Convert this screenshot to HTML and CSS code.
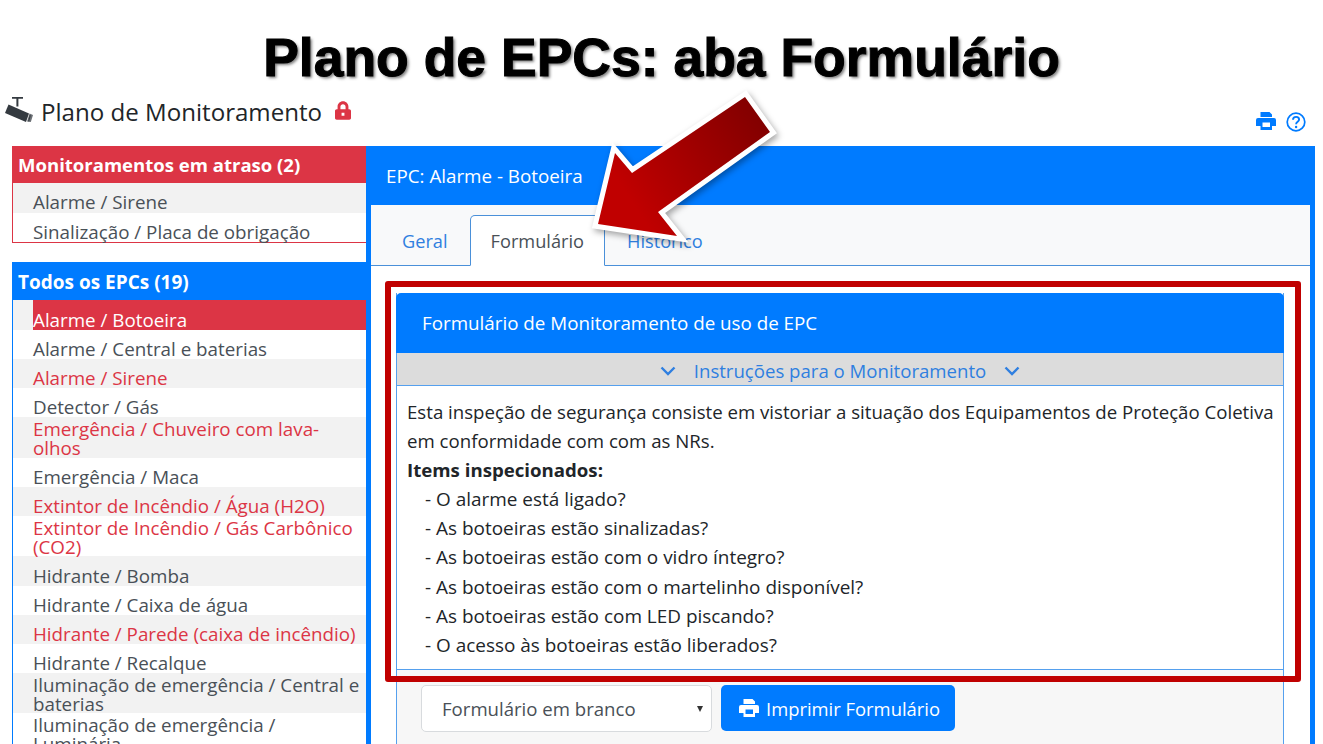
FILE: index.html
```html
<!DOCTYPE html>
<html lang="pt">
<head>
<meta charset="utf-8">
<title>Plano de EPCs</title>
<link rel="stylesheet" href="styles.css">
</head>
<body>
<div class="page">
  <h1 class="slide-title">Plano de EPCs: aba Formulário</h1>
  <header class="app-head">
    <div class="app-title">
      <svg class="cam" viewBox="0 0 28 25" width="28" height="25"><path fill="#343a40" d="M7 0h11v1.800h-4.600V9.500h-2V1.800H7z"/><path fill="#343a40" d="M3.500 7.500 24 16.500 21 25 0 16z"/><path fill="#6c7075" d="M24.500 16.500l3.500 1.500-2.200 7-3.800-.5z"/><path fill="#343a40" d="M24.800 18l1 .4-1.700 6-1-.2z"/></svg>
      <span>Plano de Monitoramento</span>
      <svg class="lock" viewBox="0 0 448 512" width="16" height="19"><path fill="#dc3545" d="M400 224h-24v-72C376 68 308 0 224 0S72 68 72 152v72H48c-26.500 0-48 21.500-48 48v192c0 26.500 21.500 48 48 48h352c26.500 0 48-21.500 48-48V272c0-26.500-21.500-48-48-48zm-104 0H152v-72c0-39.700 32.300-72 72-72s72 32.300 72 72v72zM184 320h80v80h-80z" fill-rule="evenodd"/></svg>
    </div>
    <div class="app-tools">
      <svg viewBox="0 0 20 18" width="20" height="18"><path fill="#007bff" fill-rule="evenodd" d="M4.500 0h9L16 2.500V5H4.500zM2 6h16a2 2 0 0 1 2 2v6h-4v4H4.500v-4H0V8a2 2 0 0 1 2-2zM6.500 10.500v4.500h7.500v-4.500z"/></svg>
      <svg viewBox="0 0 20 20" width="20" height="20"><circle cx="10" cy="10" r="8.800" fill="none" stroke="#007bff" stroke-width="1.700"/><path fill="none" stroke="#007bff" stroke-width="1.900" d="M7 7.800c0-1.800 1.400-2.900 3.100-2.900 1.800 0 3 1.100 3 2.600 0 2.300-3 2.300-3 4.700"/><circle cx="10.100" cy="15" r="1.200" fill="#007bff"/></svg>
    </div>
  </header>
  <div class="columns">
    <aside class="sidebar">
      <section class="list-card danger">
        <h2 class="list-head">Monitoramentos em atraso (2)</h2>
        <ul class="list">
          <li class="row">Alarme / Sirene</li>
          <li class="row">Sinalização / Placa de obrigação</li>
        </ul>
      </section>
      <section class="list-card primary">
        <h2 class="list-head">Todos os EPCs (19)</h2>
        <ul class="list">
          <li class="row"><span class="selected">Alarme / Botoeira</span></li>
          <li class="row">Alarme / Central e baterias</li>
          <li class="row late">Alarme / Sirene</li>
          <li class="row">Detector / Gás</li>
          <li class="row late">Emergência / Chuveiro com lava-olhos</li>
          <li class="row">Emergência / Maca</li>
          <li class="row late">Extintor de Incêndio / Água (H2O)</li>
          <li class="row late">Extintor de Incêndio / Gás Carbônico (CO2)</li>
          <li class="row">Hidrante / Bomba</li>
          <li class="row">Hidrante / Caixa de água</li>
          <li class="row late">Hidrante / Parede (caixa de incêndio)</li>
          <li class="row">Hidrante / Recalque</li>
          <li class="row">Iluminação de emergência / Central e baterias</li>
          <li class="row">Iluminação de emergência / Luminária</li>
        </ul>
      </section>
    </aside>
    <main class="panel">
      <div class="panel-head">EPC: Alarme - Botoeira</div>
      <div class="panel-body">
        <nav class="tabs">
          <a class="tab">Geral</a>
          <a class="tab active">Formulário</a>
          <a class="tab">Histórico</a>
        </nav>
        <div class="tab-content">
          <section class="form-card">
            <div class="form-head">Formulário de Monitoramento de uso de EPC</div>
            <div class="instr-bar">
              <svg viewBox="0 0 16 10" width="16" height="10"><path fill="none" stroke="#2f7fe0" stroke-width="2.400" d="M1.500 1.500 8 8l6.500-6.500"/></svg>
              <span>Instruções para o Monitoramento</span>
              <svg viewBox="0 0 16 10" width="16" height="10"><path fill="none" stroke="#2f7fe0" stroke-width="2.400" d="M1.500 1.500 8 8l6.500-6.500"/></svg>
            </div>
            <div class="instr-text">
              <p>Esta inspeção de segurança consiste em vistoriar a situação dos Equipamentos de Proteção Coletiva em conformidade com com as NRs.</p>
              <p class="items-title"><strong>Items inspecionados:</strong></p>
              <p class="item">- O alarme está ligado?</p>
              <p class="item">- As botoeiras estão sinalizadas?</p>
              <p class="item">- As botoeiras estão com o vidro íntegro?</p>
              <p class="item">- As botoeiras estão com o martelinho disponível?</p>
              <p class="item">- As botoeiras estão com LED piscando?</p>
              <p class="item">- O acesso às botoeiras estão liberados?</p>
            </div>
            <div class="form-foot">
              <div class="select"><span>Formulário em branco</span><i class="caret"></i></div>
              <button class="btn" type="button">
                <svg viewBox="0 0 20 18" width="20" height="18"><path fill="#fff" fill-rule="evenodd" d="M4.500 0h9L16 2.500V5H4.500zM2 6h16a2 2 0 0 1 2 2v6h-4v4H4.500v-4H0V8a2 2 0 0 1 2-2zM6.500 10.500v4.500h7.500v-4.500z"/></svg>
                <span>Imprimir Formulário</span>
              </button>
            </div>
          </section>
        </div>
      </div>
    </main>
  </div>
  <div class="highlight"></div>
  <svg class="arrow" viewBox="0 0 1323 744" width="1323" height="744">
    <defs>
      <linearGradient id="arrowFill" x1="598" y1="225" x2="770" y2="115" gradientUnits="userSpaceOnUse">
        <stop offset="0.200" stop-color="#c00000"/>
        <stop offset="1" stop-color="#7f0000"/>
      </linearGradient>
    </defs>
    <polygon class="arrow-shape" points="598,224 615,153 632,173 745,97 770,132 658,212 677,236"/>
  </svg>
</div>
</body>
</html>
```
FILE: styles.css
```css
* { box-sizing: border-box; }
html, body { margin: 0; padding: 0; }
body {
  width: 1323px;
  height: 744px;
  overflow: hidden;
  background: #fff;
  font-family: "Open Sans", "Noto Sans", sans-serif;
  font-size: 18.6px;
  color: #343a40;
}
.page { position: relative; width: 1323px; height: 744px; overflow: hidden; }
.slide-title {
  margin: 0;
  height: 96px;
  padding-top: 28px;
  text-align: center;
  font-family: "Liberation Sans", sans-serif;
  font-weight: 700;
  font-size: 53.500px;
  line-height: 60px;
  color: #000;
  -webkit-text-stroke: 1px #000;
  text-shadow: 2px 2px 3px rgba(0,0,0,.5);
}
.app-head { display: flex; justify-content: space-between; height: 50px; padding: 0 17px 0 5px; }
.app-title { display: flex; align-items: flex-start; color: #212529; font-size: 24.100px; line-height: 32px; }
.cam { margin-top: 1px; margin-right: 8px; }
.lock { margin: 5px 0 0 13px; }
.app-tools { display: flex; gap: 10px; padding-top: 16px; align-items: flex-start; }
.columns { display: flex; padding: 0 8px 0 12px; }
.sidebar { width: 354px; flex: none; font-size: 18.800px; }
.list-card { margin-bottom: 19px; border-bottom: 1px solid #dc3545; }
.list-head { margin: 0; height: 37px; padding: 0 6px; color: #fff; font-size: 18.550px; font-weight: 700; line-height: 38px; }
.danger .list-head { background: #dc3545; }
.primary .list-head { background: #007bff; height: 38px; line-height: 40px; font-size: 19px; }
.list { list-style: none; margin: 0; padding: 0; }
.danger .list { border-left: 1px solid #dc3545; }
.primary .list { border-left: 1px solid #007bff; }
.row {
  display: flex;
  align-items: flex-end;
  min-height: 29.200px;
  padding: 3px 3px 0 20px;
  line-height: 18.700px;
  color: #495057;
}
.danger .row { min-height: 29.700px; padding-bottom: 1px; }
.row:nth-child(odd) { background: #f2f2f2; }
.row.late { color: #dc3545; }
.row .selected { display: flex; align-items: flex-end; align-self: stretch; flex: 1; margin: -3px -3px 0 0; background: #dc3545; color: #fff; }
.panel { flex: 1; background: #007bff; padding: 0 5px; height: 600px; }
.panel-head { height: 59px; padding: 15px 15px 0; color: #fff; font-size: 18.800px; line-height: 30px; }
.panel-body { height: 540px; background: #fff; }
.tabs { display: flex; height: 61px; padding: 10px 15px 0; background: #f8f9fa; border-bottom: 1px solid #4a90d9; font-size: 18.200px; }
.tab { padding: 0 20px; height: 51px; line-height: 51px; color: #2f7fe0; border: 1px solid transparent; }
.tabs .tab:first-child { padding: 0 21px 0 15px; }
.tab.active { margin-right: 1px; color: #495057; background: #fff; border-color: #4a90d9; border-bottom-color: #fff; border-radius: 5px 5px 0 0; }
.tab-content { padding: 27px 26px 0 25px; }
.form-card { border-left: 1px solid #55a0ee; border-right: 1px solid #55a0ee; }
.form-head { height: 60px; margin: 0 -1px; padding: 0 26px; background: #007bff; color: #fff; line-height: 60px; font-size: 18.800px; border-radius: 5px 5px 0 0; }
.instr-bar { display: flex; justify-content: center; align-items: center; gap: 18px; height: 33px; padding-top: 3px; background: #dcdcdc; color: #2f7fe0; border-bottom: 1px solid #55a0ee; }
.instr-bar span { line-height: 30px; }
.instr-text { height: 284px; padding: 11px 0 0 10px; color: #212529; font-size: 18.650px; line-height: 29.100px; border-bottom: 1px solid #55a0ee; }
.instr-text p { margin: 0; }
.instr-text .items-title { margin-bottom: 1px; }
.instr-text .item { padding-left: 18px; font-size: 18.950px; }
.form-foot { display: flex; gap: 9px; height: 140px; padding: 15px 24px; background: #f7f7f7; }
.select { display: flex; align-items: center; justify-content: space-between; width: 291px; height: 47px; padding: 0 8px 0 20px; background: #fff; border: 1px solid #d8dbde; border-radius: 5px; color: #495057; }
.caret { width: 0; height: 0; border-left: 3.500px solid transparent; border-right: 3.500px solid transparent; border-top: 6px solid #333; }
.btn { display: flex; align-items: center; gap: 7px; height: 46px; width: 234px; padding: 0 0 0 18px; border: 0; border-radius: 5px; background: #007bff; color: #fff; font: inherit; font-size: 18.400px; white-space: nowrap; }
.highlight { position: absolute; left: 385px; top: 281px; width: 916px; height: 401px; border: 6px solid #c00000; border-radius: 3px; }
.arrow { position: absolute; left: 0; top: 0; filter: drop-shadow(2px 3px 3px rgba(0,0,0,.35)); }
.arrow-shape { fill: url(#arrowFill); stroke: #fff; stroke-width: 10px; stroke-linejoin: miter; stroke-miterlimit: 6; paint-order: stroke; }
```
